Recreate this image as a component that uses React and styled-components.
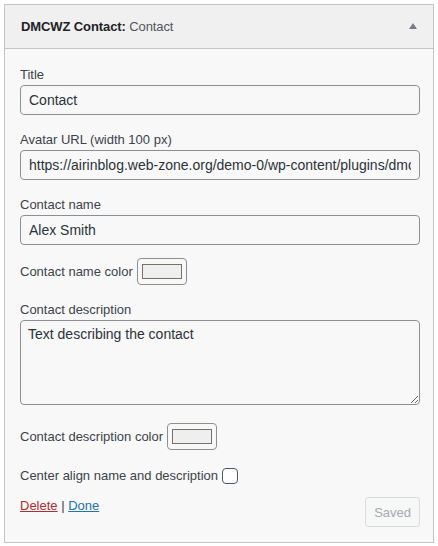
import React from 'react'
import styled, { createGlobalStyle } from 'styled-components'

const Global = createGlobalStyle`
  body {
    margin: 0;
    background: #fff;
    font-family: "Liberation Sans", Arial, sans-serif;
  }
`

const Page = styled.div`
  padding: 4px;
  width: 438px;
  box-sizing: border-box;
`

const Widget = styled.div`
  border: 1px solid #c3c4c7;
  background: #f8f8f8;
`

const Header = styled.div`
  display: flex;
  align-items: center;
  justify-content: space-between;
  height: 43px;
  padding: 0 16px;
  background: #f0f0f1;
  border-bottom: 1px solid #c3c4c7;
`

const HeaderTitle = styled.h3`
  margin: 0;
  font-size: 13px;
  letter-spacing: -0.1px;
  font-weight: 600;
  color: #1d2327;

  span {
    font-weight: 400;
    color: #50575e;
  }
`

const Arrow = styled.span`
  width: 0;
  height: 0;
  margin-top: -2px;
  border-left: 4px solid transparent;
  border-right: 4px solid transparent;
  border-bottom: 6px solid #787c82;
`

const Body = styled.div`
  padding: 17px 13px 15px 15px;
`

const Field = styled.div`
  margin-bottom: ${p => p.gap ?? 16}px;
`

const Label = styled.label`
  display: block;
  font-size: 13px;
  line-height: 18px;
  color: #3c434a;
  margin-bottom: 1px;
`

const TextInput = styled.input`
  display: block;
  width: 100%;
  box-sizing: border-box;
  height: 30px;
  padding: 0 8px;
  border: 1px solid #8c8f94;
  border-radius: 4px;
  background: #f8f8f8;
  font-family: inherit;
  font-size: 14px;
  color: #2c3338;
  outline: none;
`

const TextArea = styled.textarea`
  display: block;
  width: 100%;
  box-sizing: border-box;
  height: 85px;
  padding: 4px 7px;
  border: 1px solid #8c8f94;
  border-radius: 4px;
  background: #f8f8f8;
  font-family: inherit;
  font-size: 14px;
  line-height: 18px;
  color: #2c3338;
  outline: none;
`

const InlineRow = styled.div`
  display: flex;
  align-items: center;
  gap: 4px;
  font-size: 13px;
  line-height: 18px;
  color: #3c434a;
  margin-bottom: ${p => p.gap ?? 16}px;
`

const Swatch = styled.span`
  display: inline-flex;
  align-items: center;
  justify-content: center;
  width: 50px;
  height: 27px;
  box-sizing: border-box;
  border: 1px solid #8c8f94;
  border-radius: 4px;
  background: #f8f8f8;

  &::after {
    content: '';
    width: 40px;
    height: 15px;
    box-sizing: border-box;
    background: #efefef;
    border: 1px solid #77716c;
  }
`

const Check = styled.span`
  display: inline-block;
  width: 16px;
  height: 16px;
  box-sizing: border-box;
  border: 1px solid #50575e;
  border-radius: 4px;
  background: #fff;
`

const Footer = styled.div`
  display: flex;
  justify-content: space-between;
  align-items: flex-start;
`

const Links = styled.div`
  font-size: 13px;
  line-height: 18px;
  color: #3c434a;
`

const Link = styled.a`
  color: ${p => (p.$danger ? '#b32d2e' : '#2271b1')};
  text-decoration: underline;
  cursor: pointer;
`

const SaveButton = styled.button`
  height: 30px;
  padding: 0 8px;
  border: 1px solid #dcdcde;
  border-radius: 3px;
  background: #f6f7f7;
  color: #a7aaad;
  font-family: inherit;
  font-size: 13px;
`

export default function App() {
  return (
    <Page>
      <Global />
      <Widget>
        <Header>
          <HeaderTitle>
            DMCWZ Contact: <span>Contact</span>
          </HeaderTitle>
          <Arrow />
        </Header>
        <Body>
          <Field>
            <Label>Title</Label>
            <TextInput defaultValue="Contact" />
          </Field>
          <Field>
            <Label>Avatar URL (width 100 px)</Label>
            <TextInput defaultValue="https://airinblog.web-zone.org/demo-0/wp-content/plugins/dmcwz-contact/avatar.png" />
          </Field>
          <Field gap={13}>
            <Label>Contact name</Label>
            <TextInput defaultValue="Alex Smith" />
          </Field>
          <InlineRow gap={16}>
            Contact name color <Swatch />
          </InlineRow>
          <Field gap={18}>
            <Label>Contact description</Label>
            <TextArea defaultValue="Text describing the contact" />
          </Field>
          <InlineRow gap={17}>
            Contact description color <Swatch />
          </InlineRow>
          <InlineRow gap={12}>
            Center align name and description <Check />
          </InlineRow>
          <Footer>
            <Links>
              <Link $danger>Delete</Link> | <Link>Done</Link>
            </Links>
            <SaveButton disabled>Saved</SaveButton>
          </Footer>
        </Body>
      </Widget>
    </Page>
  )
}
